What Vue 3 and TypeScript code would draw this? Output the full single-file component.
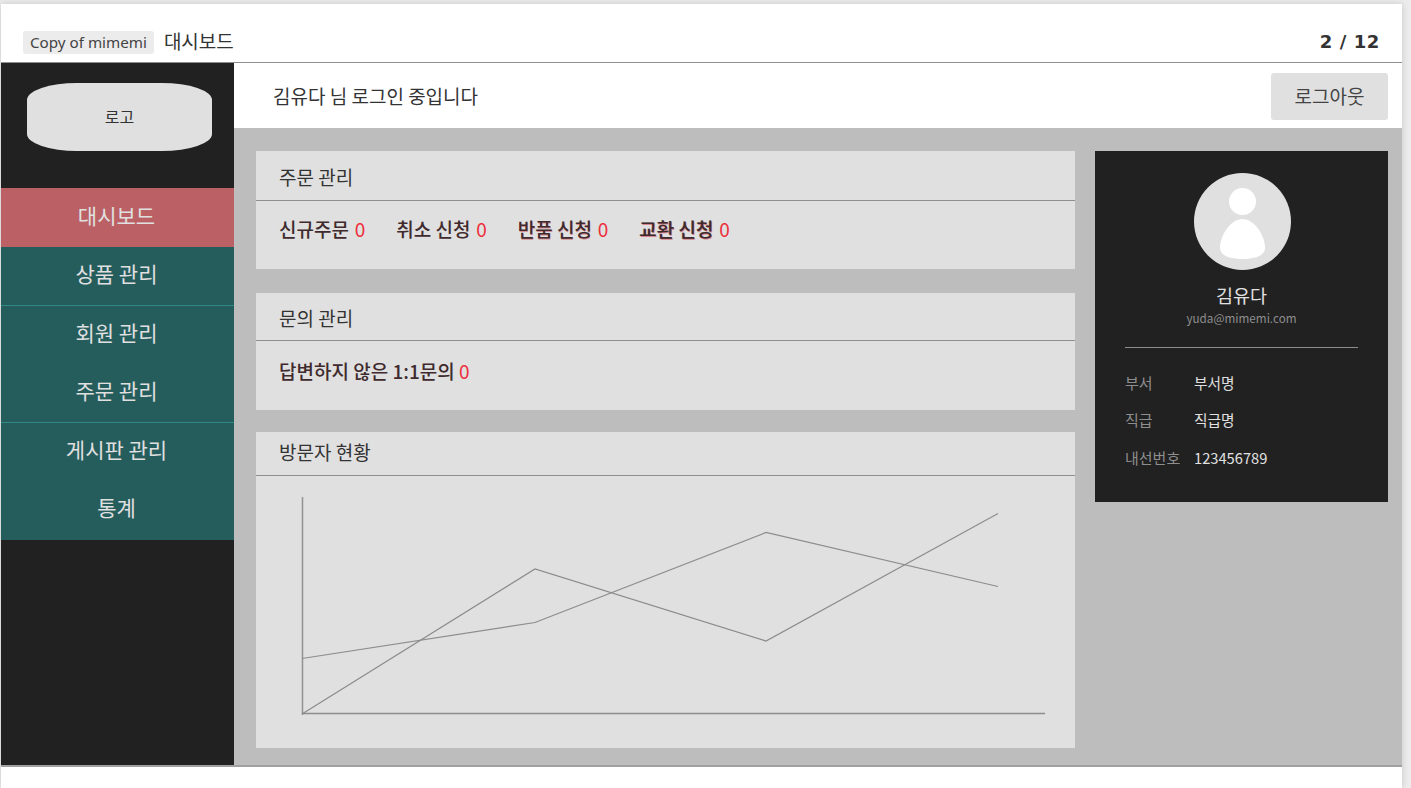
<script setup lang="ts">
const menu = ['대시보드', '상품 관리', '회원 관리', '주문 관리', '게시판 관리', '통계'];
const orderStats = [
  { label: '신규주문', count: 0, smear: '' },
  { label: '취소 신청', count: 0, smear: '' },
  { label: '반품 신청', count: 0, smear: 'smear' },
  { label: '교환 신청', count: 0, smear: 'smear heavy' },
];
const info = [
  { key: '부서', value: '부서명' },
  { key: '직급', value: '직급명' },
  { key: '내선번호', value: '123456789' },
];
const seriesA = '302,714 535,569 766,641 998,513.5';
const seriesB = '302,658.5 535,622.5 766,532.5 998,586.5';
</script>

<template>
  <div class="page">
    <div class="sheet">
      <header class="title-bar">
        <div class="title-left">
          <span class="file-tag">Copy of mimemi</span>
          <span class="file-name">대시보드</span>
        </div>
        <span class="pager">2 / 12</span>
      </header>

      <div class="app">
        <aside class="sidebar">
          <div class="logo">로고</div>
          <nav class="menu">
            <a v-for="(item, i) in menu" :key="item" class="menu-item" :class="{ active: i === 0, ruled: i === 2 || i === 4 }">{{ item }}</a>
          </nav>
        </aside>

        <div class="body">
          <div class="topbar">
            <span class="welcome">김유다 님 로그인 중입니다</span>
            <button type="button" class="logout">로그아웃</button>
          </div>

          <div class="content">
            <div class="left">
              <section class="card order">
                <h2 class="card-head">주문 관리</h2>
                <div class="stats">
                  <span v-for="s in orderStats" :key="s.label" class="stat" :class="s.smear">
                    {{ s.label }} <em>{{ s.count }}</em>
                  </span>
                </div>
              </section>

              <section class="card qna">
                <h2 class="card-head">문의 관리</h2>
                <div class="stats">
                  <span class="stat">답변하지 않은 1:1문의 <em>0</em></span>
                </div>
              </section>

              <section class="card visit">
                <h2 class="card-head">방문자 현황</h2>
                <svg class="chart" width="819" height="272" viewBox="256 476 819 272" fill="none">
                  <path d="M302.5 497V715" stroke="#929292" stroke-width="1.5" />
                  <path d="M302 713.5H1045" stroke="#8c8c8c" stroke-width="1.4" />
                  <polyline :points="seriesA" stroke="#8c8c8c" stroke-width="1.2" />
                  <polyline :points="seriesB" stroke="#8c8c8c" stroke-width="1.2" />
                </svg>
              </section>
            </div>

            <aside class="profile">
              <svg class="avatar" width="97" height="97" viewBox="0 0 97 97">
                <circle cx="48.5" cy="48.5" r="48.5" fill="#e0e0e0" />
                <circle cx="48.5" cy="28.5" r="13.5" fill="#fff" />
                <path d="M48.5 46C60 46 71 62 71 75C71 83 60 86 48.5 86C37 86 26 83 26 75C26 62 37 46 48.5 46Z" fill="#fff" />
              </svg>
              <div class="name">김유다</div>
              <div class="email">yuda@mimemi.com</div>
              <dl class="info">
                <div v-for="row in info" :key="row.key" class="info-row">
                  <dt>{{ row.key }}</dt>
                  <dd>{{ row.value }}</dd>
                </div>
              </dl>
            </aside>
          </div>
        </div>
      </div>
    </div>
  </div>
</template>

<style>
html,
body {
  margin: 0;
  overflow: hidden;
  background: #ececec;
}
</style>

<style scoped>
.page {
  height: 788px;
  padding: 4px 9px 0 1px;
  box-sizing: border-box;
  font-family: 'Noto Sans CJK KR', 'Noto Sans', sans-serif;
  color: #333;
  overflow: hidden;
}

.sheet {
  height: 784px;
  background: #fff;
  display: flex;
  flex-direction: column;
  box-shadow: 0 0 7px rgba(0, 0, 0, 0.16);
}

.title-bar {
  height: 59px;
  flex: none;
  box-sizing: border-box;
  padding: 0 22px 0 22px;
  border-bottom: 1px solid #8e8e8e;
  display: flex;
  align-items: flex-end;
  justify-content: space-between;
}

.title-left {
  display: flex;
  align-items: center;
  gap: 10px;
  padding-bottom: 8px;
}

.file-tag {
  font-family: 'Noto Sans', 'Noto Sans CJK KR', sans-serif;
  background: #ececec;
  border-radius: 3px;
  padding: 0 7px;
  font-size: 15.2px;
  line-height: 23px;
  color: #444;
}

.file-name {
  font-size: 19px;
  line-height: 23px;
  color: #333;
  position: relative;
  top: -2px;
}

.pager {
  font-family: 'DejaVu Sans', sans-serif;
  font-weight: 700;
  font-size: 18px;
  line-height: 23px;
  letter-spacing: 0.6px;
  color: #333;
  padding-bottom: 9px;
}

.app {
  height: 702px;
  flex: none;
  display: flex;
  border-bottom: 2px solid #a0a0a0;
}

.sidebar {
  width: 233px;
  flex: none;
  background: #212121;
  padding-top: 20px;
  box-sizing: border-box;
}

.logo {
  width: 185px;
  height: 68px;
  margin: 0 0 37px 26px;
  padding-bottom: 2px;
  box-sizing: border-box;
  background: #e0e0e0;
  border-radius: 50px / 17px;
  display: flex;
  align-items: center;
  justify-content: center;
  font-size: 16px;
  color: #333;
}

.menu {
  height: 352px;
  display: flex;
  flex-direction: column;
  background: #255d5d;
}

.menu-item {
  height: 58.4px;
  flex: none;
  padding: 0 2px 6px 0;
  display: flex;
  align-items: center;
  justify-content: center;
  font-size: 21px;
  color: #e0e0e0;
  box-sizing: border-box;
}

.menu-item.active {
  height: 59px;
  background: #bb6165;
}

.menu-item.ruled {
  border-top: 1px solid #2f8a83;
}

.body {
  flex: 1;
  min-width: 0;
  display: flex;
  flex-direction: column;
}

.topbar {
  height: 65px;
  flex: none;
  box-sizing: border-box;
  padding: 10px 14px 8px 39px;
  display: flex;
  align-items: center;
  justify-content: space-between;
}

.welcome {
  font-size: 19px;
  line-height: 28px;
  color: #333;
  position: relative;
  top: -1px;
}

.logout {
  width: 117px;
  height: 47px;
  padding: 0 0 2px;
  border: 0;
  border-radius: 3px;
  background: #e0e0e0;
  color: #444;
  font: inherit;
  font-size: 19px;
}

.content {
  flex: 1;
  background: #bdbdbd;
  padding: 23px 14px 0 22px;
  display: flex;
  gap: 20px;
  align-items: flex-start;
}

.left {
  width: 819px;
  flex: none;
  display: flex;
  flex-direction: column;
}

.card {
  background: #e0e0e0;
}

.order {
  height: 118px;
  margin-bottom: 24px;
}

.qna {
  height: 117px;
  margin-bottom: 22px;
}

.visit {
  height: 316px;
}

.card-head {
  margin: 0;
  box-sizing: border-box;
  padding: 0 23px;
  border-bottom: 1px solid #8e8e8e;
  font-size: 19px;
  font-weight: 400;
  line-height: 28px;
  color: #333;
}

.order .card-head {
  height: 50px;
  padding-top: 12px;
}

.qna .card-head {
  height: 48px;
  padding-top: 11px;
}

.visit .card-head {
  height: 44px;
  padding-top: 6px;
}

.stats {
  display: flex;
  gap: 31px;
  padding: 15px 23px 0;
}

.order .stats {
  padding-top: 13px;
}

.order .stat em {
  margin-left: 1.5px;
}

.qna .stats {
  padding-top: 15px;
}

.stat {
  font-size: 19px;
  font-weight: 500;
  line-height: 30px;
  color: #3f2a2d;
  white-space: pre-wrap;
}

.stat.smear {
  text-shadow: 0.5px 0.7px 0 rgba(200, 40, 55, 0.45);
}

.stat.smear.heavy {
  text-shadow: 0.8px 0.8px 0 rgba(200, 40, 55, 0.5), -0.6px 0 0 rgba(63, 42, 45, 0.4);
}

.stat em {
  font-style: normal;
  font-weight: 400;
  color: #ed2f3c;
  text-shadow: none;
}

.chart {
  display: block;
}

.profile {
  width: 293px;
  height: 351px;
  flex: none;
  background: #212121;
  box-sizing: border-box;
  padding: 22px 30px 0;
  display: flex;
  flex-direction: column;
  align-items: center;
}

.avatar {
  display: block;
  flex: none;
  margin-left: 1px;
}

.name {
  margin-top: 11px;
  font-size: 18.5px;
  line-height: 28px;
  color: #e0e0e0;
}

.email {
  font-size: 11.7px;
  line-height: 18px;
  color: #8e8e8e;
}

.info {
  margin: 20px 0 0;
  align-self: stretch;
  border-top: 1px solid #8e8e8e;
  padding-top: 24px;
  display: flex;
  flex-direction: column;
  gap: 15.25px;
}

.info-row {
  display: flex;
  line-height: 22px;
  font-size: 15px;
}

.info-row dt {
  width: 69px;
  color: #8e8e8e;
}

.info-row dd {
  margin: 0;
  font-size: 14.7px;
  color: #e0e0e0;
}
</style>
